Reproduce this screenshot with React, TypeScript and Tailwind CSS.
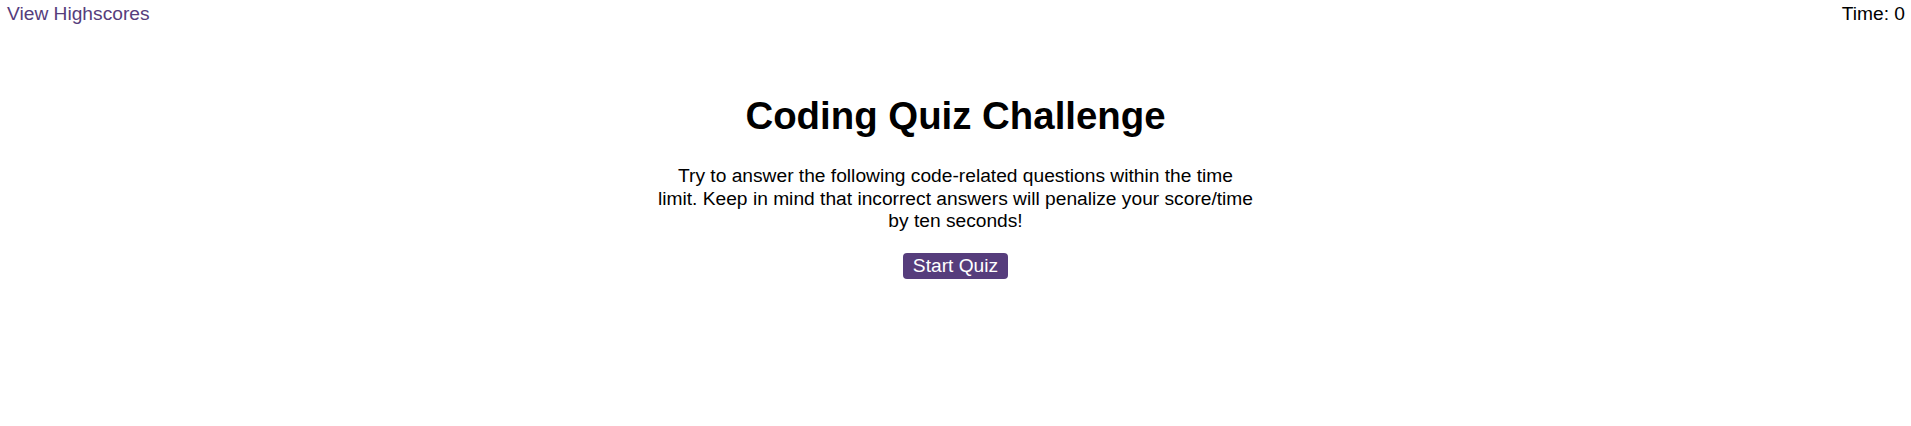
export default function App() {
  return (
    <div className="min-h-screen bg-white text-black font-['Liberation_Sans',Arial,sans-serif] text-[19.2px]">
      <header className="flex justify-between items-start px-[7px] pt-0">
        <a href="#" className="text-[#563d7c]">View Highscores</a>
        <div className="-mr-[1px]">Time: 0</div>
      </header>

      <main className="max-w-[597px] mx-auto text-center mt-[68px]">
        <h1 className="text-[38.4px] font-bold leading-none">Coding Quiz Challenge</h1>
        <p className="mt-[30px] leading-[22.5px]">
          Try to answer the following code-related questions within the time limit. Keep in mind that incorrect
          answers will penalize your score/time by ten seconds!
        </p>
        <button className="mt-[20px] bg-[#563d7c] text-white rounded-[4px] px-[10px] h-[26px] leading-[26px]">
          Start Quiz
        </button>
      </main>
    </div>
  );
}
